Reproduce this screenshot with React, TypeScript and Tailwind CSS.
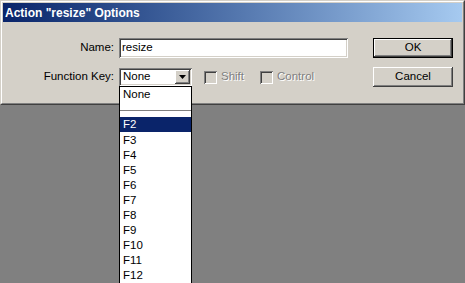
import React from "react";

const raised =
  "shadow-[inset_-1px_-1px_0_#404040,inset_1px_1px_0_#ffffff,inset_-2px_-2px_0_#808080,inset_2px_2px_0_#d4d0c8]";
const sunken =
  "shadow-[inset_1px_1px_0_#808080,inset_-1px_-1px_0_#ffffff,inset_2px_2px_0_#404040,inset_-2px_-2px_0_#d4d0c8]";

function Check({ label }: { label: string }) {
  return (
    <div className="flex items-center">
      <div className={`w-[13px] h-[13px] bg-[#d4d0c8] ${sunken}`} />
      <span className="ml-[4px] text-[#808080] [text-shadow:1px_1px_0_#ffffff]">{label}</span>
    </div>
  );
}

export default function App() {
  const fkeys = ["F3", "F4", "F5", "F6", "F7", "F8", "F9", "F10", "F11", "F12"];
  return (
    <div className="relative w-[465px] h-[283px] overflow-hidden bg-[#808080] [font-family:'Liberation_Sans',Arial,sans-serif] text-[11.5px] leading-none text-black">
      <div className="h-[105px] border border-t-[#d4d0c8] border-l-[#d4d0c8] border-r-[#404040] border-b-[#404040] bg-[#d4d0c8]">
        <div className="h-full border border-t-white border-l-white border-r-[#808080] border-b-[#808080] p-px flex flex-col">
          <div className="h-[19px] shrink-0 bg-gradient-to-r from-[#0a246a] to-[#a6caf0] flex items-center pl-[2px] text-white font-bold text-[12px]">
            Action "resize" Options
          </div>
          <div className="flex flex-1 pt-[16px]">
            <div className="flex flex-col">
              <div className="flex items-center h-[20px]">
                <div className="w-[111px] text-right">Name:</div>
                <div className={`ml-[5px] w-[229px] h-[20px] bg-white ${sunken} flex items-center pl-[3px]`}>
                  resize
                </div>
              </div>
              <div className="flex items-center h-[18px] mt-[10px]">
                <div className="w-[111px] text-right">Function Key:</div>
                <div className={`ml-[5px] w-[73px] h-[18px] bg-white ${sunken} flex items-center p-[2px]`}>
                  <span className="flex-1 pl-[2px]">None</span>
                  <div className={`w-[15px] h-[14px] bg-[#d4d0c8] ${raised} flex items-center justify-center`}>
                    <svg width="7" height="4" viewBox="0 0 7 4">
                      <path d="M0 0H7L3.5 4Z" fill="#000" />
                    </svg>
                  </div>
                </div>
                <div className="ml-[12px]">
                  <Check label="Shift" />
                </div>
                <div className="ml-[16px]">
                  <Check label="Control" />
                </div>
              </div>
            </div>
            <div className="ml-auto mr-[9px] flex flex-col gap-[9px]">
              <div className="w-[80px] h-[20px] border border-black bg-[#d4d0c8] flex items-center justify-center">
                <div className={`w-full h-full flex items-center justify-center ${raised}`}>OK</div>
              </div>
              <div className={`w-[80px] h-[20px] bg-[#d4d0c8] ${raised} flex items-center justify-center`}>Cancel</div>
            </div>
          </div>
        </div>
      </div>

      <div className="absolute left-[119px] top-[86px] w-[73px] h-[210px] border border-black bg-white">
        <div className="h-[15px] flex items-center pl-[3px] pt-px">None</div>
        <div className="h-[15px] flex items-center">
          <div className="w-full h-px bg-[#808080] mt-[1px]" />
        </div>
        <div className="h-[15px] flex items-center pl-[3px] pt-px bg-[#0a246a] text-white">F2</div>
        {fkeys.map((k) => (
          <div key={k} className="h-[15px] flex items-center pl-[3px] pt-[2px]">
            {k}
          </div>
        ))}
      </div>
    </div>
  );
}
